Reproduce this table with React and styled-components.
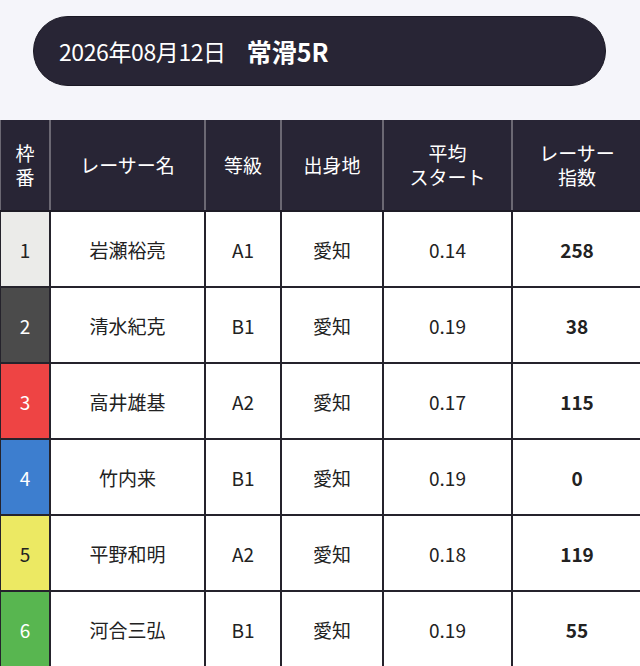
import React from 'react';
import styled, { createGlobalStyle } from 'styled-components';

const GlobalStyle = createGlobalStyle`
  html, body {
    margin: 0;
    padding: 0;
    background: #f5f5fa;
    font-family: "Noto Sans CJK JP", "Noto Sans", sans-serif;
  }
`;

const Page = styled.div`
  width: 640px;
  height: 666px;
  overflow: hidden;
`;

const RaceBar = styled.div`
  margin: 16px 34px 34px 33px;
  height: 70px;
  box-sizing: border-box;
  border-radius: 35px;
  background: #282535;
  border: 1px solid #1a1824;
  display: flex;
  align-items: center;
  padding-left: 25px;
  gap: 21px;
  color: #fff;
`;

const RaceDate = styled.span`
  font-size: 23px;
  letter-spacing: -0.4px;
`;

const RaceName = styled.span`
  font-size: 25px;
  font-weight: 700;
`;

const Table = styled.table`
  width: 642px;
  margin-left: -1px;
  border-collapse: collapse;
  table-layout: fixed;
`;

const HeadCell = styled.th`
  height: 90px;
  padding: 0;
  background: #282535;
  color: #fff;
  font-weight: 400;
  font-size: 19px;
  line-height: 24px;
  text-align: center;
  border: 2px solid #6b6873;
  border-top: 0;
  border-bottom: 2px solid #1e1c26;
`;

const Cell = styled.td`
  height: 74px;
  padding: 0;
  text-align: center;
  font-size: 19px;
  color: #222;
  background: #fff;
  border: 2px solid #25232c;
  font-weight: ${p => (p.bold ? 700 : 400)};
`;

const FrameCell = styled(Cell)`
  background: ${p => p.bg};
  color: ${p => p.fg};
`;

const frames = {
  1: { bg: '#ebebe9', fg: '#222' },
  2: { bg: '#4b4b4b', fg: '#fff' },
  3: { bg: '#ee4444', fg: '#fff' },
  4: { bg: '#3d7ecf', fg: '#fff' },
  5: { bg: '#ece963', fg: '#222' },
  6: { bg: '#58b650', fg: '#fff' },
};

const racers = [
  { no: 1, name: '岩瀬裕亮', rank: 'A1', from: '愛知', st: '0.14', score: 258 },
  { no: 2, name: '清水紀克', rank: 'B1', from: '愛知', st: '0.19', score: 38 },
  { no: 3, name: '高井雄基', rank: 'A2', from: '愛知', st: '0.17', score: 115 },
  { no: 4, name: '竹内来', rank: 'B1', from: '愛知', st: '0.19', score: 0 },
  { no: 5, name: '平野和明', rank: 'A2', from: '愛知', st: '0.18', score: 119 },
  { no: 6, name: '河合三弘', rank: 'B1', from: '愛知', st: '0.19', score: 55 },
];

export default function App() {
  return (
    <Page>
      <GlobalStyle />
      <RaceBar>
        <RaceDate>2026年08月12日</RaceDate>
        <RaceName>常滑5R</RaceName>
      </RaceBar>
      <Table>
        <colgroup>
          <col style={{ width: 50 }} />
          <col style={{ width: 155 }} />
          <col style={{ width: 76 }} />
          <col style={{ width: 102 }} />
          <col style={{ width: 129 }} />
          <col style={{ width: 130 }} />
        </colgroup>
        <thead>
          <tr>
            <HeadCell>枠<br />番</HeadCell>
            <HeadCell>レーサー名</HeadCell>
            <HeadCell>等級</HeadCell>
            <HeadCell>出身地</HeadCell>
            <HeadCell>平均<br />スタート</HeadCell>
            <HeadCell>レーサー<br />指数</HeadCell>
          </tr>
        </thead>
        <tbody>
          {racers.map(r => (
            <tr key={r.no}>
              <FrameCell bg={frames[r.no].bg} fg={frames[r.no].fg}>{r.no}</FrameCell>
              <Cell>{r.name}</Cell>
              <Cell>{r.rank}</Cell>
              <Cell>{r.from}</Cell>
              <Cell>{r.st}</Cell>
              <Cell bold>{r.score}</Cell>
            </tr>
          ))}
        </tbody>
      </Table>
    </Page>
  );
}
